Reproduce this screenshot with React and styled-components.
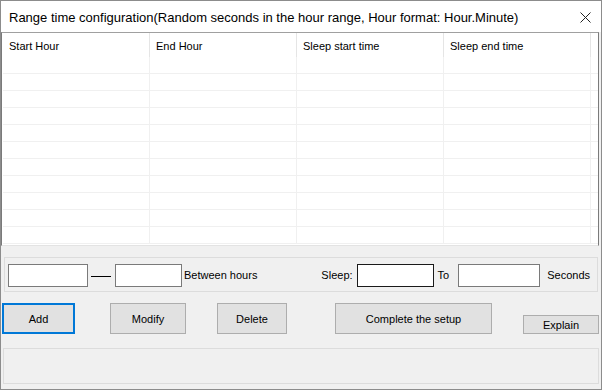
import React from 'react'
import styled, { createGlobalStyle } from 'styled-components'

const GlobalStyle = createGlobalStyle`
  html, body {
    margin: 0;
    padding: 0;
    background: #f0f0f0;
  }
  * {
    box-sizing: border-box;
  }
`

const Window = styled.div`
  width: 602px;
  height: 390px;
  border: 1px solid #8c8c8c;
  background: #f0f0f0;
  display: flex;
  flex-direction: column;
  font-family: 'Liberation Sans', Arial, sans-serif;
  font-size: 11px;
  color: #000;
`

const TitleBar = styled.div`
  height: 31px;
  flex: none;
  background: #fff;
  display: flex;
  align-items: center;
  padding: 1px 10px 0 8px;
  font-size: 13px;
  span {
    flex: 1;
    white-space: nowrap;
  }
`

const CloseBtn = styled.div`
  width: 12px;
  height: 12px;
  display: flex;
  align-items: center;
  justify-content: center;
`

const Table = styled.div`
  height: 214px;
  flex: none;
  margin-right: 2px;
  background: #fff;
  border-top: 1px solid #a0a0a0;
  border-left: 1px solid #7a7a7a;
  border-right: 1px solid #7a7a7a;
  border-bottom: 1px solid #e3e3e3;
  padding-left: 1px;
  overflow: hidden;
`

const HeaderRow = styled.div`
  display: flex;
  height: 24px;
`

const HeaderCell = styled.div`
  width: 147px;
  flex: none;
  border-right: 1px solid #e5e5e5;
  padding: 1px 0 0 6px;
  display: flex;
  align-items: center;
  white-space: nowrap;
`

const Row = styled.div`
  display: flex;
  height: 17px;
  border-bottom: 1px solid #f0f0f0;
`

const Cell = styled.div`
  width: 147px;
  flex: none;
  border-right: 1px solid #f0f0f0;
`

const GroupBox = styled.div`
  margin: 11px 3px 0 3px;
  height: 35px;
  flex: none;
  border: 1px solid #dcdcdc;
  display: flex;
  align-items: flex-start;
  padding: 6px 7px 0 3px;
`

const Input = styled.div`
  width: ${p => p.$w}px;
  height: 23px;
  flex: none;
  background: #fff;
  border: 1px solid ${p => (p.$focus ? '#1a1a1a' : '#7a7a7a')};
`

const Dash = styled.div`
  width: 20px;
  height: 1px;
  background: #000;
  margin: 12px 4px 0 3px;
  flex: none;
`

const Label = styled.span`
  line-height: 23px;
  white-space: nowrap;
  margin-left: ${p => p.$ml || 0}px;
  margin-right: ${p => p.$mr || 0}px;
`

const Spacer = styled.div`
  flex: 1;
`

const ButtonRow = styled.div`
  margin-top: 11px;
  height: 31px;
  flex: none;
  display: flex;
  align-items: flex-end;
  padding-left: 1px;
`

const Button = styled.div`
  width: ${p => p.$w}px;
  height: ${p => p.$h || 31}px;
  margin-left: ${p => p.$ml || 0}px;
  flex: none;
  background: #e1e1e1;
  border: ${p => (p.$default ? '2px solid #0078d7' : '1px solid #adadad')};
  display: flex;
  align-items: center;
  justify-content: center;
  font-size: 11px;
  white-space: nowrap;
`

const StatusBox = styled.div`
  margin: 14px 2px 0 2px;
  height: 36px;
  flex: none;
  border: 1px solid #dcdcdc;
`

const columns = ['Start Hour', 'End Hour', 'Sleep start time', 'Sleep end time']
const rows = Array.from({ length: 11 })

const App = () => {
  return (
    <>
      <GlobalStyle />
      <Window>
        <TitleBar>
          <span>Range time configuration(Random seconds in the hour range, Hour format: Hour.Minute)</span>
          <CloseBtn>
            <svg width="11" height="11" viewBox="0 0 11 11">
              <path d="M0.5 0.5 L10.5 10.5 M10.5 0.5 L0.5 10.5" stroke="#222" strokeWidth="1" fill="none" />
            </svg>
          </CloseBtn>
        </TitleBar>

        <Table>
          <HeaderRow>
            {columns.map(c => (
              <HeaderCell key={c}>{c}</HeaderCell>
            ))}
          </HeaderRow>
          {rows.map((_, i) => (
            <Row key={i}>
              {columns.map(c => (
                <Cell key={c} />
              ))}
            </Row>
          ))}
        </Table>

        <GroupBox>
          <Input $w={80} />
          <Dash />
          <Input $w={67} />
          <Label $ml={2}>Between hours</Label>
          <Spacer />
          <Label $mr={4}>Sleep:</Label>
          <Input $w={77} $focus />
          <Label $ml={4} $mr={9}>To</Label>
          <Input $w={82} />
          <Label $ml={7}>Seconds</Label>
        </GroupBox>

        <ButtonRow>
          <Button $w={73} $default>Add</Button>
          <Button $w={76} $ml={35}>Modify</Button>
          <Button $w={70} $ml={31}>Delete</Button>
          <Button $w={157} $ml={48}>Complete the setup</Button>
          <Button $w={76} $h={19} $ml={31}>Explain</Button>
        </ButtonRow>

        <StatusBox />
      </Window>
    </>
  )
}

export default App
